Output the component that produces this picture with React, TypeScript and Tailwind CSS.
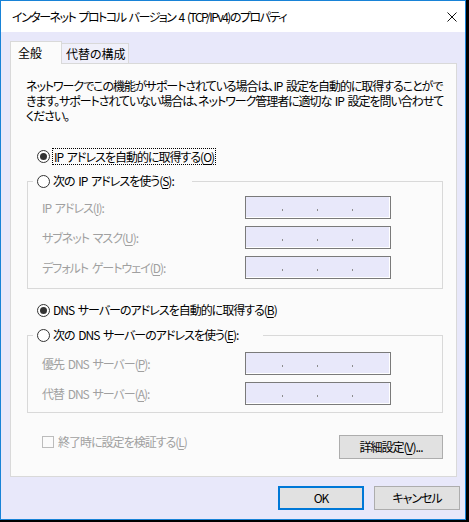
import React from "react";

const U = ({ c }: { c: string }) => (
  <span className="underline underline-offset-[2px] decoration-[1px]">{c}</span>
);

function Radio({ checked }: { checked?: boolean }) {
  return (
    <span className="w-[13px] h-[13px] rounded-full border border-[#333333] bg-white flex items-center justify-center shrink-0">
      {checked && <span className="w-[7px] h-[7px] rounded-full bg-[#333333]" />}
    </span>
  );
}

function Dot() {
  return <span className="mt-[12px] w-[1px] h-[2px] bg-[#8c8c8c] shrink-0" />;
}

function IPBox() {
  return (
    <div className="w-[146px] h-[23px] border border-[#7a7a7a] bg-[#e8e8fa] shadow-[inset_-1px_-1px_0_#ffffff] flex items-start shrink-0">
      <span className="w-[36px] shrink-0" />
      <Dot />
      <span className="w-[34px] shrink-0" />
      <Dot />
      <span className="w-[34px] shrink-0" />
      <Dot />
    </div>
  );
}

function FieldRow({ children }: { children: React.ReactNode }) {
  return (
    <div className="flex items-center h-[23px] pl-[14px]">
      <div className="w-[203px] text-[#a0a0a0] leading-[16px] whitespace-nowrap">{children}</div>
      <IPBox />
    </div>
  );
}

export default function App() {
  return (
    <div className="w-[469px] h-[522px] bg-black font-['Noto_Sans_CJK_JP',sans-serif] [font-feature-settings:'palt'] text-[12px] tracking-[-1px] [word-spacing:2px] text-black">
      <div className="w-[466px] h-[520px] border border-[#1883d7] bg-[#e8e8fa] flex flex-col">
        {/* Title bar */}
        <div className="h-[31px] bg-white flex items-center pl-[11px] pr-[8px] shrink-0">
          <span className="leading-[16px] flex-1 whitespace-nowrap tracking-[-1.5px]">インターネット プロトコル バージョン 4 (TCP/IPv4)のプロパティ</span>
          <svg width="10" height="10" viewBox="0 0 10 10">
            <path d="M0.5 0.5 L9.5 9.5 M9.5 0.5 L0.5 9.5" stroke="#111" strokeWidth="1" fill="none" />
          </svg>
        </div>

        {/* Body */}
        <div className="flex-1 pl-[9px] pr-[8px] pt-[9px] flex flex-col">
          {/* Tabs */}
          <div className="flex items-start h-[22px] tracking-normal">
            <div className="relative z-10 w-[52px] h-[23px] border-t border-l border-r border-[#d9d9d9] bg-[#fbfbfb] pl-[7px] pt-[3px] leading-[16px]">
              全般
            </div>
            <div className="mt-[2px] w-[67px] h-[20px] border-t border-r border-[#d9d9d9] bg-[#f0f0fa] pl-[4px] pt-[2px] leading-[16px] whitespace-nowrap">
              代替の構成
            </div>
          </div>

          {/* Panel */}
          <div className="w-[447px] h-[414px] border border-[#d9d9d9] bg-[#fbfbfb] flex flex-col shrink-0">
            <p className="mt-[14px] ml-[15px] leading-[15px] whitespace-nowrap tracking-[-1.05px]">
              ネットワークでこの機能がサポートされている場合は、IP 設定を自動的に取得することがで
              <br />
              きます。サポートされていない場合は、ネットワーク管理者に適切な IP 設定を問い合わせて
              <br />
              ください。
            </p>

            {/* Radio 1 */}
            <div className="mt-[25px] ml-[26px] h-[17px] flex items-center">
              <Radio checked />
              <span className="ml-[2px] h-[17px] border border-dotted border-black leading-[15px] pl-[1px] pr-[1px] whitespace-nowrap">
                IP アドレスを自動的に取得する(<U c="O" />)
              </span>
            </div>

            {/* Group 1 */}
            <fieldset className="mt-[8px] ml-[16px] w-[416px] border border-[#d9d9d9] p-0 pb-[9px]">
              <legend className="ml-[5px] w-[159px] h-[16px] flex items-center p-0">
                <span className="pl-[4px] flex items-center">
                  <Radio />
                  <span className="ml-[3px] leading-[16px] whitespace-nowrap">
                    次の IP アドレスを使う(<U c="S" />):
                  </span>
                </span>
              </legend>
              <div className="mt-[7px] flex flex-col gap-[7px]">
                <FieldRow>
                  IP アドレス(<U c="I" />):
                </FieldRow>
                <FieldRow>
                  サブネット マスク(<U c="U" />):
                </FieldRow>
                <FieldRow>
                  デフォルト ゲートウェイ(<U c="D" />):
                </FieldRow>
              </div>
            </fieldset>

            {/* Radio 3 */}
            <div className="mt-[13px] ml-[26px] h-[16px] flex items-center">
              <Radio checked />
              <span className="ml-[3px] leading-[16px] whitespace-nowrap">
                DNS サーバーのアドレスを自動的に取得する(<U c="B" />)
              </span>
            </div>

            {/* Group 2 */}
            <fieldset className="mt-[9px] ml-[16px] w-[416px] border border-[#d9d9d9] p-0 pb-[7px]">
              <legend className="ml-[5px] w-[230px] h-[16px] flex items-center p-0">
                <span className="pl-[4px] flex items-center">
                  <Radio />
                  <span className="ml-[3px] leading-[16px] whitespace-nowrap">
                    次の DNS サーバーのアドレスを使う(<U c="E" />):
                  </span>
                </span>
              </legend>
              <div className="mt-[9px] flex flex-col gap-[7px]">
                <FieldRow>
                  優先 DNS サーバー(<U c="P" />):
                </FieldRow>
                <FieldRow>
                  代替 DNS サーバー(<U c="A" />):
                </FieldRow>
              </div>
            </fieldset>

            {/* Checkbox + Advanced */}
            <div className="mt-[22px] flex items-start justify-between pl-[31px] pr-[13px]">
              <div className="-mt-[1px] h-[16px] flex items-center">
                <span className="w-[12px] h-[12px] border border-[#bcbcbc] bg-[#fbfbfb] shrink-0" />
                <span className="ml-[4px] leading-[16px] text-[#a0a0a0] whitespace-nowrap">
                  終了時に設定を検証する(<U c="L" />)
                </span>
              </div>
              <button className="w-[104px] h-[24px] border border-[#adadad] bg-[#e1e1e1] flex items-center justify-center leading-[16px] whitespace-nowrap">
                詳細設定(<U c="V" />)...
              </button>
            </div>
          </div>

          {/* OK / Cancel */}
          <div className="mt-[9px] -mr-[3px] flex justify-end gap-[10px]">
            <button className="w-[86px] h-[24px] border-2 border-[#0078d7] bg-[#e1e1e1] flex items-center justify-center leading-[16px]">
              OK
            </button>
            <button className="w-[86px] h-[24px] border border-[#adadad] bg-[#e1e1e1] flex items-center justify-center leading-[16px] whitespace-nowrap">
              キャンセル
            </button>
          </div>
        </div>
      </div>
    </div>
  );
}
